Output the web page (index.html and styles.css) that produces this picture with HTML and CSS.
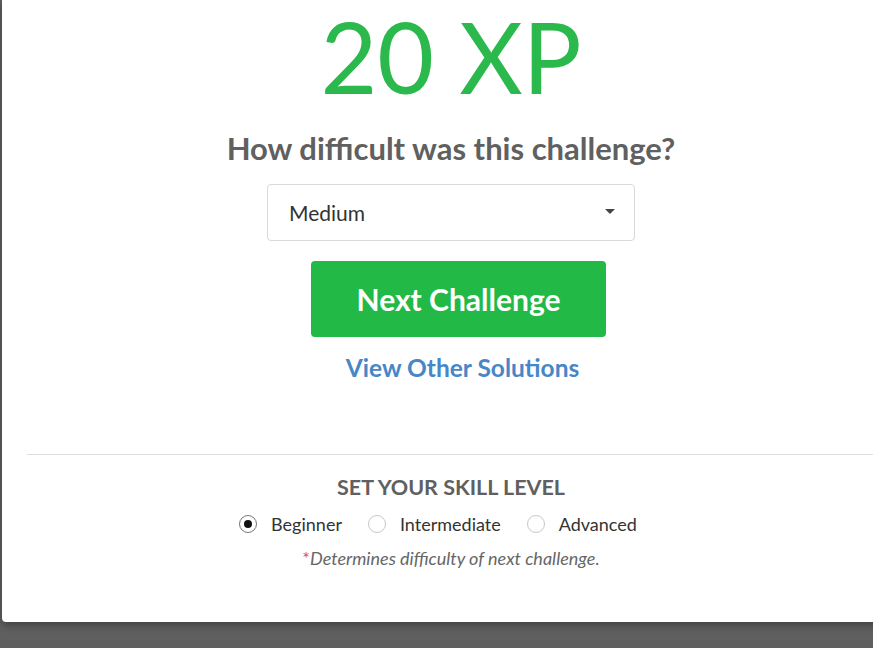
FILE: index.html
```html
<!DOCTYPE html>
<html>
<head>
<meta charset="utf-8">
<link rel="stylesheet" href="styles.css">
</head>
<body>
<div class="modal">
  <div class="xp">20 XP</div>
  <h2 class="question">How difficult was this challenge?</h2>
  <div class="select">
    <span class="select-value">Medium</span>
    <span class="caret"></span>
  </div>
  <div class="actions">
    <button class="btn-next">Next Challenge</button>
    <a class="link-solutions" href="#">View Other Solutions</a>
  </div>
  <div class="divider"></div>
  <div class="skill">
    <div class="skill-title">SET YOUR SKILL LEVEL</div>
    <div class="radios">
      <label class="radio"><span class="dot checked"></span>Beginner</label>
      <label class="radio"><span class="dot"></span>Intermediate</label>
      <label class="radio"><span class="dot"></span>Advanced</label>
    </div>
    <div class="note"><span class="star">*</span>Determines difficulty of next challenge.</div>
  </div>
</div>
</body>
</html>
```
FILE: styles.css
```css
html, body {
  margin: 0;
  padding: 0;
  height: 100%;
  overflow: hidden;
}
body {
  background: #5f5f5f;
  font-family: Lato, "Open Sans", sans-serif;
}
.modal {
  margin-left: 2px;
  width: 898px;
  height: 622px;
  background: #fff;
  border-bottom-left-radius: 4px;
  box-shadow: 0 3px 8px rgba(0,0,0,0.35);
  display: flex;
  flex-direction: column;
  align-items: center;
  box-sizing: border-box;
}
.xp {
  margin-top: 0;
  font-size: 98px;
  line-height: 112px;
  color: #2bb84d;
  font-weight: 400;
}
.question {
  margin: 18px 0 0;
  font-size: 31px;
  line-height: 36px;
  font-weight: 700;
  color: #606060;
}
.select {
  margin-top: 18px;
  width: 368px;
  height: 57px;
  box-sizing: border-box;
  border: 1px solid #d9d9d9;
  border-radius: 4px;
  display: flex;
  align-items: center;
  justify-content: space-between;
  padding: 0 19px 0 21px;
}
.select-value {
  font-size: 21px;
  color: #333;
}
.caret {
  width: 0;
  height: 0;
  border-left: 5px solid transparent;
  border-right: 5px solid transparent;
  border-top: 5px solid #444;
  margin-bottom: 2px;
}
.actions {
  display: flex;
  flex-direction: column;
  align-items: center;
  margin-left: 15px;
}
.btn-next {
  margin-top: 20px;
  width: 295px;
  height: 76px;
  border: none;
  border-radius: 4px;
  background: #22b947;
  color: #fff;
  font-family: Lato, "Open Sans", sans-serif;
  font-size: 30px;
  font-weight: 700;
  padding: 0;
}
.link-solutions {
  margin-top: 16px;
  font-size: 24.5px;
  line-height: 29px;
  font-weight: 700;
  color: #4787c7;
  text-decoration: none;
  margin-left: 8px;
}
.divider {
  align-self: stretch;
  margin: 72px 0 0 25px;
  border-top: 1px solid #dedede;
}
.skill {
  display: flex;
  flex-direction: column;
  align-items: center;
  margin-top: 19px;
}
.skill-title {
  font-size: 21.5px;
  line-height: 26px;
  font-weight: 700;
  color: #606060;
}
.radios {
  display: flex;
  gap: 26px;
  margin-top: 12px;
  margin-left: -26px;
}
.radio {
  display: flex;
  align-items: center;
  font-size: 18px;
  line-height: 24px;
  color: #333;
}
.dot {
  width: 18px;
  height: 18px;
  border: 1px solid #c8c8c8;
  border-radius: 50%;
  margin-right: 14px;
  box-sizing: border-box;
  display: flex;
  align-items: center;
  justify-content: center;
}
.dot.checked {
  border-color: #777;
}
.dot.checked::after {
  content: "";
  width: 8px;
  height: 8px;
  border-radius: 50%;
  background: #111;
}
.note {
  margin-top: 11px;
  font-size: 18px;
  line-height: 22px;
  font-style: italic;
  color: #666;
}
.star {
  color: #d9534f;
  font-style: normal;
}
```
